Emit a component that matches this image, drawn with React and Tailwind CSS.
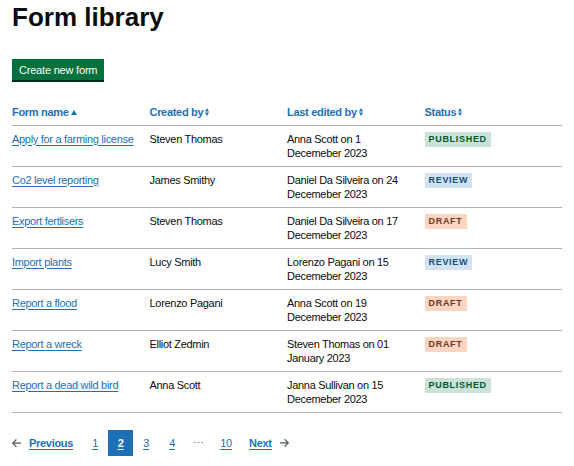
import React from "react";

const rows = [
  { name: "Apply for a farming license", by: "Steven Thomas", edited: "Anna Scott on 1 Decemeber 2023", status: "published" },
  { name: "Co2 level reporting", by: "James Smithy", edited: "Daniel Da Silveira on 24 Decemeber 2023", status: "review" },
  { name: "Export fertlisers", by: "Steven Thomas", edited: "Daniel Da Silveira on 17 Decemeber 2023", status: "draft" },
  { name: "Import plants", by: "Lucy Smith", edited: "Lorenzo Pagani on 15 Decemeber 2023", status: "review" },
  { name: "Report a flood", by: "Lorenzo Pagani", edited: "Anna Scott on 19 Decemeber 2023", status: "draft" },
  { name: "Report a wreck", by: "Elliot Zedmin", edited: "Steven Thomas on 01 January 2023", status: "draft" },
  { name: "Report a dead wild bird", by: "Anna Scott", edited: "Janna Sullivan on 15 Decemeber 2023", status: "published" },
];

const tagStyles = {
  published: "bg-[#cce2d8] text-[#005a30]",
  review: "bg-[#d2e2f1] text-[#144e81]",
  draft: "bg-[#fcd6c3] text-[#6e3619]",
};

function SortBoth() {
  return (
    <svg width="4" height="8" viewBox="0 0 4 8" className="inline-block ml-[2px] mb-[1px]" fill="currentColor">
      <path d="M0 3.4 L2 0 L4 3.4Z M0 4.6 L2 8 L4 4.6Z" />
    </svg>
  );
}

function SortUp() {
  return (
    <svg width="6" height="5" viewBox="0 0 6 5" className="inline-block ml-[2px] mb-[1px]" fill="currentColor">
      <path d="M0 5 L3 0 L6 5Z" />
    </svg>
  );
}

function Arrow({ dir }) {
  return (
    <svg width="9" height="8" viewBox="0 0 15 13" fill="#505a5f" className={dir === "right" ? "rotate-180" : ""}>
      <path d="m6.5938-0.0078125-6.7266 6.7266 6.8203 6.8281 1.4102-1.4062-4.3789-4.375h11.34v-2h-11.34l4.2734-4.3594z" />
    </svg>
  );
}

function Header({ children, icon }) {
  return (
    <th className="text-left font-bold text-[#1d70b8] pt-[6px] pb-[6px] pr-2 leading-[14px] border-b border-[#b1b4b6]">
      {children}
      {icon}
    </th>
  );
}

export default function App() {
  return (
    <div className="px-3 pt-[2px] text-[#0b0c0c] bg-white min-h-[466px]" style={{ fontFamily: '"Liberation Sans", Arial, sans-serif' }}>
      <h1 className="text-[26px] leading-[30px] font-bold">Form library</h1>

      <button className="mt-[27px] h-[21px] px-[7px] bg-[#00703c] text-white text-[11px] tracking-[-0.2px] leading-[14px] shadow-[0_2px_0_#002d18]">
        Create new form
      </button>

      <table className="mt-[18px] w-full table-fixed border-collapse text-[11px] tracking-[-0.3px]">
        <thead>
          <tr>
            <Header icon={<SortUp />}>Form name</Header>
            <Header icon={<SortBoth />}>Created by</Header>
            <Header icon={<SortBoth />}>Last edited by</Header>
            <Header icon={<SortBoth />}>Status</Header>
          </tr>
        </thead>
        <tbody>
          {rows.map((r) => (
            <tr key={r.name} className="border-b border-[#b1b4b6] align-top">
              <td className="pt-[6px] pb-[6px] pr-2 leading-[14px]">
                <a href="#" className="text-[#1d70b8] underline decoration-1 underline-offset-2">{r.name}</a>
              </td>
              <td className="pt-[6px] pb-[6px] pr-2 leading-[14px]">{r.by}</td>
              <td className="pt-[6px] pb-[6px] pr-3 leading-[14px]">{r.edited}</td>
              <td className="pt-[6px] pb-[6px] pr-2 leading-[14px]">
                <span className={`block w-fit px-[4px] py-[2px] text-[9px] leading-[11px] font-bold uppercase tracking-[0.7px] ${tagStyles[r.status]}`}>
                  {r.status}
                </span>
              </td>
            </tr>
          ))}
        </tbody>
      </table>

      <nav className="mt-[17px] flex items-center text-[11px] tracking-[-0.3px] leading-[14px]">
        <a href="#" className="flex items-center gap-[8px] font-bold text-[#1d70b8]">
          <Arrow dir="left" />
          <span className="underline decoration-1 underline-offset-2">Previous</span>
        </a>
        <ul className="flex items-center ml-[9px]">
          <li className="w-[26px] h-[26px] flex items-center justify-center">
            <a href="#" className="text-[#1d70b8] underline decoration-1 underline-offset-2">1</a>
          </li>
          <li className="w-[25px] h-[26px] flex items-center justify-center bg-[#1d70b8]">
            <a href="#" className="text-white font-bold underline decoration-1 underline-offset-2">2</a>
          </li>
          <li className="w-[26px] h-[26px] flex items-center justify-center">
            <a href="#" className="text-[#1d70b8] underline decoration-1 underline-offset-2">3</a>
          </li>
          <li className="w-[26px] h-[26px] flex items-center justify-center">
            <a href="#" className="text-[#1d70b8] underline decoration-1 underline-offset-2">4</a>
          </li>
          <li className="w-[26px] h-[26px] flex items-center justify-center text-[#505a5f]">⋯</li>
          <li className="w-[30px] h-[26px] flex items-center justify-center">
            <a href="#" className="text-[#1d70b8] underline decoration-1 underline-offset-2">10</a>
          </li>
        </ul>
        <a href="#" className="ml-[8px] flex items-center gap-[8px] font-bold text-[#1d70b8]">
          <span className="underline decoration-1 underline-offset-2">Next</span>
          <Arrow dir="right" />
        </a>
      </nav>
    </div>
  );
}
